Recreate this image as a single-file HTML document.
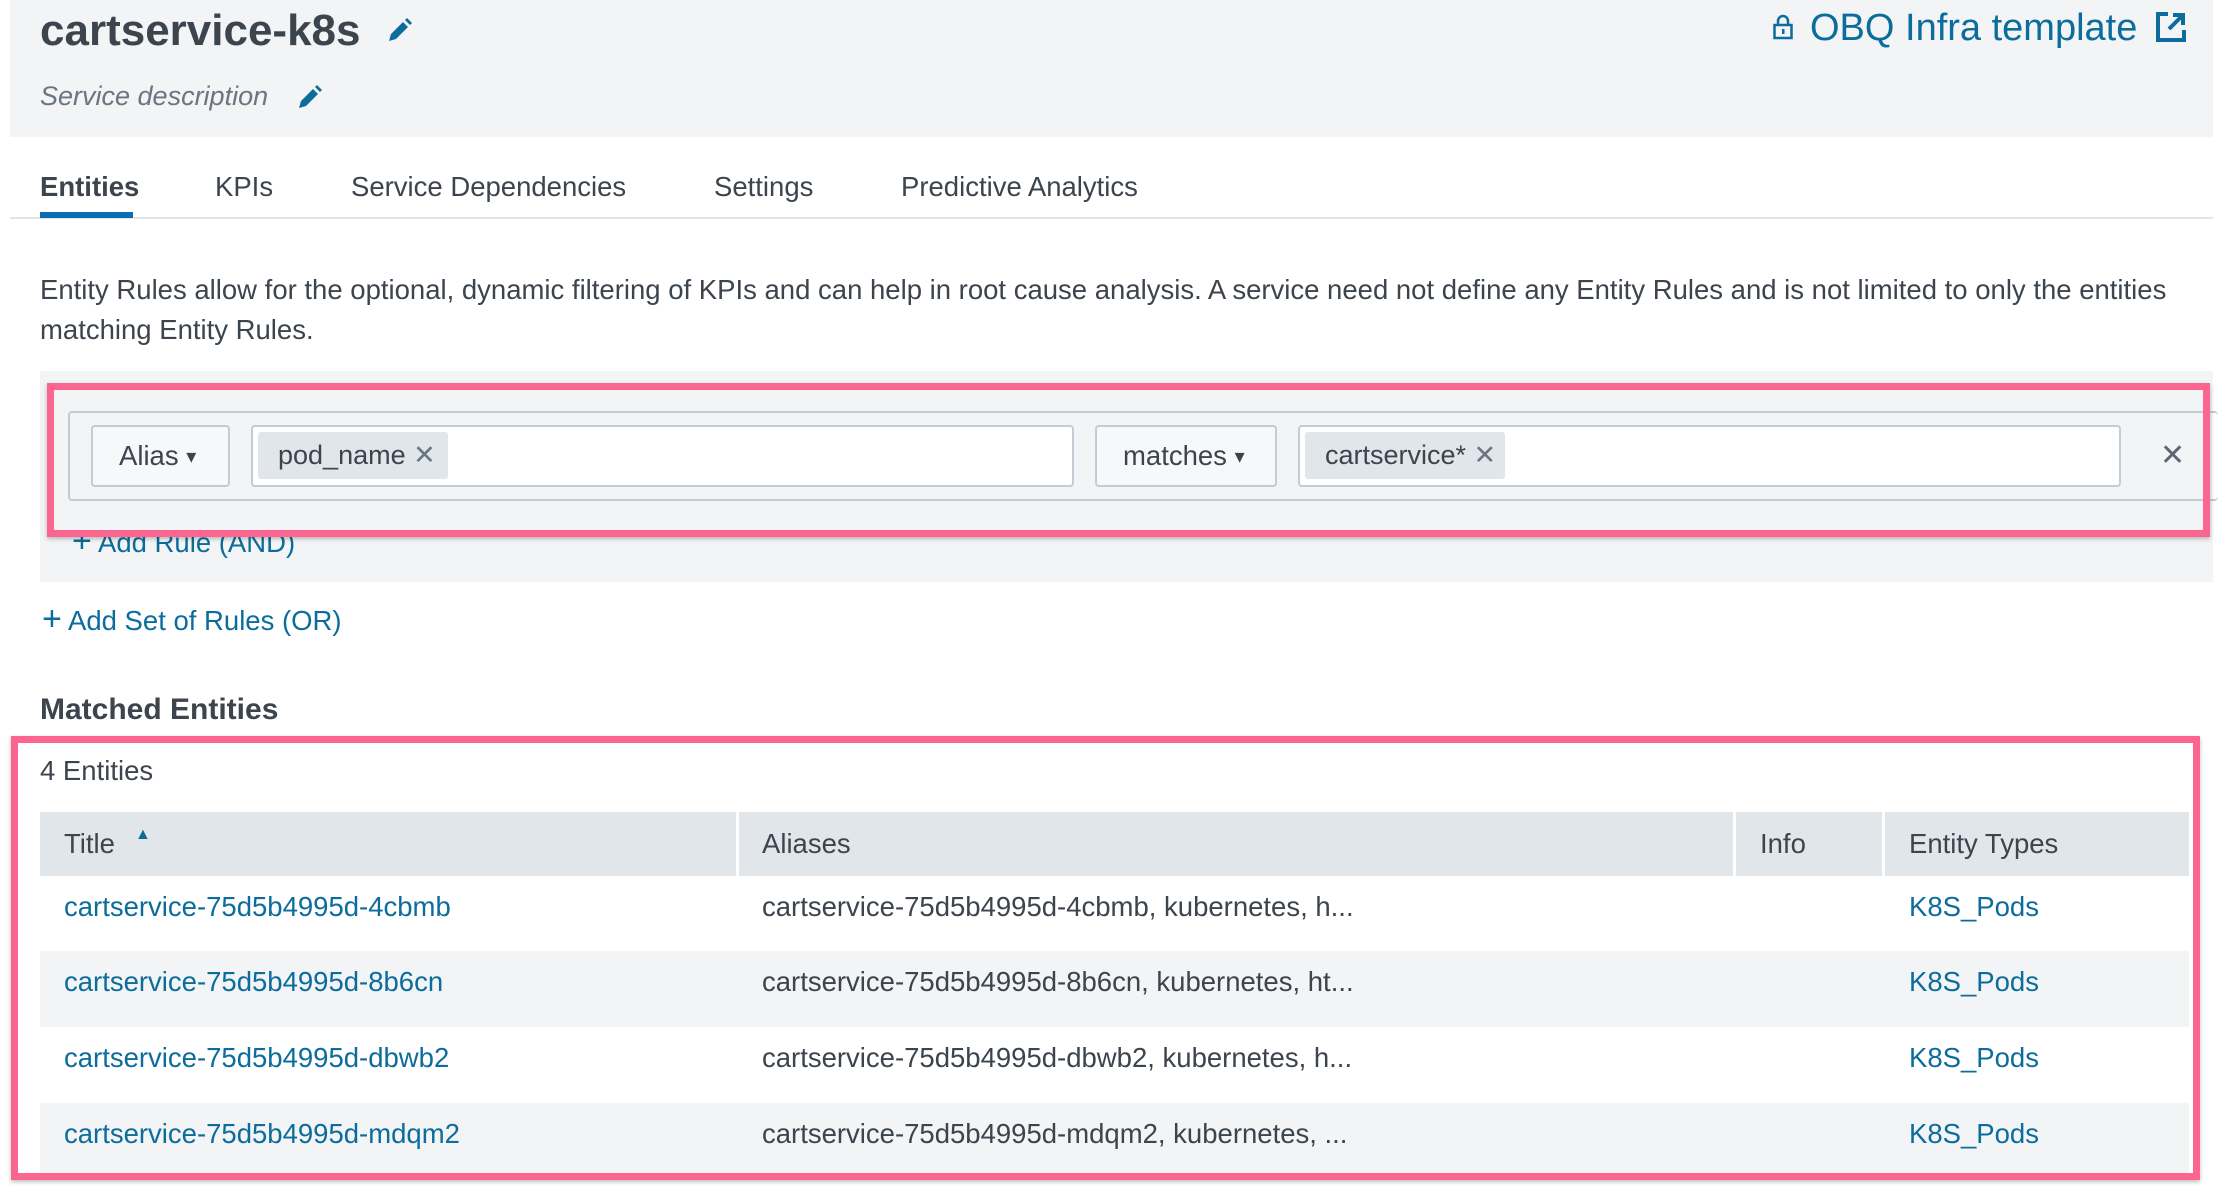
<!DOCTYPE html>
<html><head><meta charset="utf-8"><style>
*{box-sizing:border-box;margin:0;padding:0}
body{width:2222px;height:1186px;background:#fff;font-family:"Liberation Sans",sans-serif;color:#3c444d;position:relative;overflow:hidden}
.a{position:absolute;white-space:nowrap}
.blue{color:#0c6c9c}
.t{font-size:27.5px;line-height:30px}
.box{position:absolute;background:#fff;border:2px solid #c3cbd4;border-radius:4px}
.dd{background:#f7f8fa}
.tag{position:absolute;background:#e1e6eb;border-radius:3px;font-size:27px;line-height:47px;padding-left:20px}
.pink{position:absolute;border:7px solid #fd6591;box-shadow:0 2px 4px rgba(0,0,0,.25)}
.arr{font-size:20px;vertical-align:2px}
</style></head><body>
<div class="a" style="left:10px;top:0;width:2203px;height:137px;background:#f2f4f5"></div>
<div class="a" style="left:40px;top:6px;font-size:44px;font-weight:bold;line-height:50px;color:#3c444d">cartservice-k8s</div>
<svg class="a" style="left:385px;top:17px" width="28" height="28" viewBox="0 0 28 28"><path d="M4 24 L6 17 L18 5 L23 10 L11 22 Z" fill="#0c6c9c"/><path d="M20 3 L22 1 L27 6 L25 8 Z" fill="#0c6c9c"/></svg>
<div class="a" style="left:40px;top:80px;font-size:27px;font-style:italic;color:#6b7580;line-height:32px">Service description</div>
<svg class="a" style="left:295px;top:84px" width="28" height="28" viewBox="0 0 28 28"><path d="M4 24 L6 17 L18 5 L23 10 L11 22 Z" fill="#0c6c9c"/><path d="M20 3 L22 1 L27 6 L25 8 Z" fill="#0c6c9c"/></svg>
<svg class="a" style="left:1772px;top:13px" width="22" height="28" viewBox="0 0 22 28"><path d="M6 12 V8 a5 5 0 0 1 10 0 V12" fill="none" stroke="#0c6c9c" stroke-width="2.5"/><rect x="2.5" y="12" width="17" height="13" fill="none" stroke="#0c6c9c" stroke-width="2.5"/><rect x="10" y="16" width="2.5" height="5" fill="#0c6c9c"/></svg>
<div class="a blue" style="left:1810px;top:6px;font-size:38px;line-height:44px">OBQ Infra template</div>
<svg class="a" style="left:2155px;top:11px" width="32" height="32" viewBox="0 0 32 32"><path d="M13 3 H3 V29 H29 V19" fill="none" stroke="#0c6c9c" stroke-width="4"/><path d="M14 18 L27 5 M18 4 H28 V14" fill="none" stroke="#0c6c9c" stroke-width="4"/></svg>
<div class="a t" style="left:40px;top:172px;font-weight:bold">Entities</div>
<div class="a t" style="left:215px;top:172px">KPIs</div>
<div class="a t" style="left:351px;top:172px">Service Dependencies</div>
<div class="a t" style="left:714px;top:172px">Settings</div>
<div class="a t" style="left:901px;top:172px">Predictive Analytics</div>
<div class="a" style="left:10px;top:217px;width:2203px;height:2px;background:#e1e6eb"></div>
<div class="a" style="left:40px;top:212px;width:93px;height:6px;background:#0c6cb0"></div>
<div class="a" style="left:40px;top:270px;width:2150px;font-size:27.5px;line-height:40px;white-space:normal">Entity Rules allow for the optional, dynamic filtering of KPIs and can help in root cause analysis. A service need not define any Entity Rules and is not limited to only the entities matching Entity Rules.</div>
<div class="a" style="left:40px;top:371px;width:2173px;height:211px;background:#f2f4f5"></div>
<div class="a blue t" style="left:72px;top:526px"><span style="font-size:34px">+</span> Add Rule (AND)</div>
<div class="a" style="left:68px;top:411px;width:2150px;height:90px;border:2px solid #c3cbd4;border-right:none;border-radius:4px"></div>
<div class="box dd" style="left:91px;top:425px;width:139px;height:62px"><span class="a t" style="left:26px;top:14px">Alias <span class="arr">▾</span></span></div>
<div class="box" style="left:251px;top:425px;width:823px;height:62px"></div>
<div class="tag" style="left:258px;top:432px;width:190px">pod_name <span style="color:#6b7580">✕</span></div>
<div class="box dd" style="left:1095px;top:425px;width:182px;height:62px"><span class="a t" style="left:26px;top:14px">matches <span class="arr">▾</span></span></div>
<div class="box" style="left:1298px;top:425px;width:823px;height:62px"></div>
<div class="tag" style="left:1305px;top:432px;width:200px">cartservice* <span style="color:#6b7580">✕</span></div>
<div class="a" style="left:2160px;top:438px;font-size:30px;color:#5c6773">✕</div>
<div class="pink" style="left:47px;top:383px;width:2163px;height:154px"></div>
<div class="a blue t" style="left:42px;top:604px"><span style="font-size:34px">+</span> Add Set of Rules (OR)</div>
<div class="a" style="left:40px;top:693px;font-size:30px;font-weight:bold;line-height:34px">Matched Entities</div>
<div class="a t" style="left:40px;top:756px">4 Entities</div>
<div class="a" style="left:40px;top:812px;width:2149px;height:64px;background:#e1e6eb"></div>
<div class="a" style="left:736px;top:812px;width:3px;height:64px;background:#fff"></div>
<div class="a" style="left:1733px;top:812px;width:3px;height:64px;background:#fff"></div>
<div class="a" style="left:1882px;top:812px;width:3px;height:64px;background:#fff"></div>
<div class="a t" style="left:64px;top:829px">Title</div>
<div class="a" style="left:135px;top:826px;font-size:16px;color:#0c6c9c">▲</div>
<div class="a t" style="left:762px;top:829px">Aliases</div>
<div class="a t" style="left:1760px;top:829px">Info</div>
<div class="a t" style="left:1909px;top:829px">Entity Types</div>
<div class="a" style="left:40px;top:951px;width:2149px;height:76px;background:#f2f4f5"></div>
<div class="a" style="left:40px;top:1103px;width:2149px;height:76px;background:#f2f4f5"></div>
<div class="a t blue" style="left:64px;top:892px">cartservice-75d5b4995d-4cbmb</div>
<div class="a t" style="left:762px;top:892px">cartservice-75d5b4995d-4cbmb, kubernetes, h...</div>
<div class="a t blue" style="left:1909px;top:892px">K8S_Pods</div>
<div class="a t blue" style="left:64px;top:967px">cartservice-75d5b4995d-8b6cn</div>
<div class="a t" style="left:762px;top:967px">cartservice-75d5b4995d-8b6cn, kubernetes, ht...</div>
<div class="a t blue" style="left:1909px;top:967px">K8S_Pods</div>
<div class="a t blue" style="left:64px;top:1043px">cartservice-75d5b4995d-dbwb2</div>
<div class="a t" style="left:762px;top:1043px">cartservice-75d5b4995d-dbwb2, kubernetes, h...</div>
<div class="a t blue" style="left:1909px;top:1043px">K8S_Pods</div>
<div class="a t blue" style="left:64px;top:1119px">cartservice-75d5b4995d-mdqm2</div>
<div class="a t" style="left:762px;top:1119px">cartservice-75d5b4995d-mdqm2, kubernetes, ...</div>
<div class="a t blue" style="left:1909px;top:1119px">K8S_Pods</div>
<div class="pink" style="left:11px;top:736px;width:2189px;height:444px"></div>
</body></html>
